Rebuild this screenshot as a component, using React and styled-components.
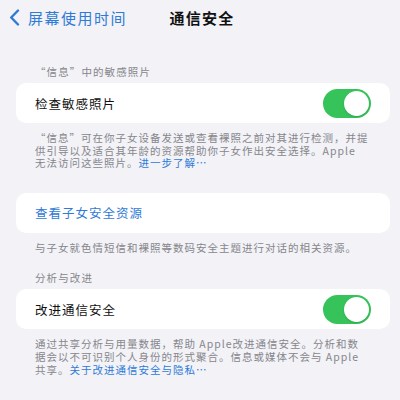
import React from "react";
import styled, { createGlobalStyle } from "styled-components";

const Global = createGlobalStyle`
  html, body { margin: 0; padding: 0; background: #f2f2f7; }
  body { font-family: "Noto Sans CJK SC", "Noto Sans", sans-serif; -webkit-font-smoothing: antialiased; }
`;

const Page = styled.div`
  width: 400px;
  height: 400px;
  overflow: hidden;
  background: #f2f2f7;
  display: flex;
  flex-direction: column;
`;

const NavBar = styled.div`
  height: 34px;
  display: grid;
  grid-template-columns: 1fr auto 1fr;
  align-items: center;
  padding: 0 9px;
`;

const Back = styled.div`
  display: flex;
  align-items: center;
  gap: 8px;
  color: #2f7ad6;
  font-size: 15px;
  letter-spacing: 1.5px;
  white-space: nowrap;
`;

const Title = styled.div`
  font-size: 15px;
  font-weight: 700;
  letter-spacing: 1.3px;
  color: #111;
  padding-left: 4px;
`;

const Content = styled.div`
  display: flex;
  flex-direction: column;
  padding: 32px 10px 0 16px;
`;

const SectionHeader = styled.div`
  padding: 0 19px;
  font-size: 10.5px;
  letter-spacing: 1.1px;
  line-height: 12px;
  color: #86868b;
  margin-top: ${(p) => p.$mt || 0}px;
  margin-bottom: 5px;
`;

const Card = styled.div`
  height: 40px;
  background: #fff;
  border-radius: 10px;
  display: flex;
  align-items: center;
  justify-content: space-between;
  padding: 0 19px;
  margin-top: ${(p) => p.$mt || 0}px;
`;

const CardLabel = styled.div`
  font-size: 12.5px;
  letter-spacing: 1px;
  color: ${(p) => (p.$link ? "#2f7ad6" : "#111")};
`;

const Footer = styled.div`
  padding: ${(p) => p.$pt || 9}px 10px 0 19px;
  font-size: 10.5px;
  letter-spacing: 1px;
  line-height: 12.6px;
  color: #86868b;
  white-space: nowrap;
`;

const Link = styled.span`
  color: #2f7ad6;
`;

const ToggleTrack = styled.div`
  width: 48px;
  height: 29px;
  border-radius: 15px;
  background: #36c35a;
  position: relative;
  flex-shrink: 0;
`;

const Knob = styled.div`
  position: absolute;
  top: 2px;
  right: 2px;
  width: 25px;
  height: 25px;
  border-radius: 50%;
  background: #fff;
  box-shadow: 0 1px 2px rgba(0, 0, 0, 0.15);
`;

const Toggle = () => (
  <ToggleTrack>
    <Knob />
  </ToggleTrack>
);

const Chevron = () => (
  <svg width="11" height="17" viewBox="0 0 11 17">
    <path d="M9 1.5 L2.2 8.5 L9 15.5" fill="none" stroke="#2f7ad6" strokeWidth="2.4" strokeLinecap="round" strokeLinejoin="round" />
  </svg>
);

export default function App() {
  return (
    <Page>
      <Global />
      <NavBar>
        <Back>
          <Chevron />
          <span>屏幕使用时间</span>
        </Back>
        <Title>通信安全</Title>
        <div />
      </NavBar>
      <Content>
        <SectionHeader>“信息”中的敏感照片</SectionHeader>
        <Card>
          <CardLabel>检查敏感照片</CardLabel>
          <Toggle />
        </Card>
        <Footer>
          “信息”可在你子女设备发送或查看裸照之前对其进行检测，并提
          <br />
          供引导以及适合其年龄的资源帮助你子女作出安全选择。Apple
          <br />
          无法访问这些照片。<Link>进一步了解…</Link>
        </Footer>
        <Card $mt={23}>
          <CardLabel $link>查看子女安全资源</CardLabel>
        </Card>
        <Footer>与子女就色情短信和裸照等数码安全主题进行对话的相关资源。</Footer>
        <SectionHeader $mt={18}>分析与改进</SectionHeader>
        <Card>
          <CardLabel>改进通信安全</CardLabel>
          <Toggle />
        </Card>
        <Footer $pt={9}>
          通过共享分析与用量数据，帮助 Apple改进通信安全。分析和数
          <br />
          据会以不可识别个人身份的形式聚合。信息或媒体不会与 Apple
          <br />
          共享。<Link>关于改进通信安全与隐私…</Link>
        </Footer>
      </Content>
    </Page>
  );
}
